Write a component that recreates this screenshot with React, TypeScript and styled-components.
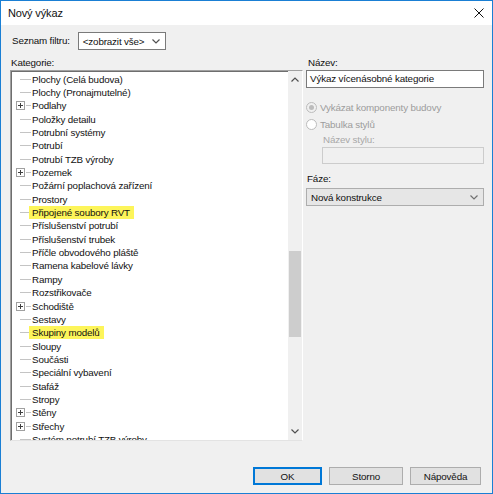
import * as React from 'react';
import styled, { createGlobalStyle } from 'styled-components';

const Global = createGlobalStyle`
	html, body { margin: 0; padding: 0; background: #fff; }
	* { box-sizing: border-box; }
`;

const FONT = `"Liberation Sans", Arial, sans-serif`;

const Window = styled.div`
	width: 493px;
	height: 494px;
	border: 1px solid #1a7fd4;
	display: flex;
	flex-direction: column;
	font-family: ${FONT};
	font-size: 9.8px;
	letter-spacing: -0.15px;
	color: #111;
	background: #f0f0f0;
`;

const TitleBar = styled.div`
	height: 24px;
	background: #fff;
	display: flex;
	align-items: center;
	justify-content: space-between;
	padding: 0 8px 0 7px;
`;

const Title = styled.span`
	font-size: 11px;
	letter-spacing: -0.15px;
`;

const Body = styled.div`
	flex: 1;
	display: flex;
	flex-direction: column;
	padding: 6px 8px 8px 9px;
`;

const FilterRow = styled.div`
	height: 20px;
	display: flex;
	align-items: center;
	gap: 8px;
	padding-left: 1px;
`;

const Label = styled.div<{ $muted?: boolean; $indent?: number }>`
	height: 14px;
	line-height: 14px;
	white-space: nowrap;
	color: ${p => (p.$muted ? '#a8a8a8' : '#111')};
	padding-left: ${p => p.$indent ?? 1}px;
`;

// Combo box / drop-down
const Select = styled.div<{ $width?: number; $flat?: boolean }>`
	width: ${p => (p.$width ? `${p.$width}px` : 'auto')};
	height: 18px;
	display: flex;
	align-items: center;
	justify-content: space-between;
	padding: 0 5px 0 4px;
	background: ${p => (p.$flat ? '#e6e6e6' : '#fff')};
	border: 1px solid ${p => (p.$flat ? '#adadad' : '#7a7a7a')};
	white-space: nowrap;
`;

const Columns = styled.div`
	margin-top: 5px;
	display: grid;
	grid-template-columns: 293px 178px;
	column-gap: 3px;
`;

const Col = styled.div`
	display: flex;
	flex-direction: column;
`;

const TreeBox = styled.div`
	height: 371px;
	display: flex;
	background: #fff;
	border: 1px solid;
	border-color: #a0a0a0 #fff #e3e3e3 #a0a0a0;
	box-shadow: inset 1px 1px 0 #6e6e6e;
	overflow: hidden;
`;

const TreeList = styled.div`
	flex: 1;
	padding-top: 1.5px;
	overflow: hidden;
`;

const Row = styled.div`
	height: 13.35px;
	display: flex;
	align-items: center;
	white-space: nowrap;
`;

// Connector area to the left of the label
const Stub = styled.div`
	width: 21px;
	height: 100%;
	display: flex;
	align-items: center;
	padding-left: 5px;
	flex-shrink: 0;
`;

const Line = styled.div<{ $short?: boolean }>`
	flex: 1;
	height: 1px;
	background: #c4c4c4;
	margin-left: ${p => (p.$short ? 1 : 4)}px;
	margin-right: 1px;
`;

const Expander = styled.div`
	width: 9px;
	height: 9px;
	border: 1px solid #a0a0a0;
	background: #fff;
	position: relative;
	flex-shrink: 0;

	&:before {
		content: '';
		position: absolute;
		left: 1px;
		top: 3px;
		width: 5px;
		height: 1px;
		background: #404040;
	}
	&:after {
		content: '';
		position: absolute;
		left: 3px;
		top: 1px;
		width: 1px;
		height: 5px;
		background: #404040;
	}
`;

const Name = styled.span<{ $hi?: boolean }>`
	height: 13px;
	line-height: 13px;
	padding: 0 4px 0 3px;
	margin-left: -3px;
	background: ${p => (p.$hi ? '#fdf55a' : 'transparent')};
`;

const ScrollBar = styled.div`
	width: 14px;
	display: flex;
	flex-direction: column;
	background: #f0f0f0;
`;

const ArrowBtn = styled.div`
	height: 17px;
	display: flex;
	align-items: center;
	justify-content: center;
`;

const Track = styled.div`
	flex: 1;
	padding: 0 1px;
`;

const Thumb = styled.div<{ $top: number; $height: number }>`
	margin-top: ${p => p.$top}px;
	height: ${p => p.$height}px;
	background: #cdcdcd;
`;

const Input = styled.div<{ $disabled?: boolean }>`
	height: 18px;
	line-height: 16px;
	padding-left: 3px;
	background: ${p => (p.$disabled ? '#f0f0f0' : '#fff')};
	border: 1px solid ${p => (p.$disabled ? '#cccccc' : '#7a7a7a')};
	white-space: nowrap;
`;

const RadioGroup = styled.div`
	margin-top: 11px;
	display: flex;
	flex-direction: column;
`;

const RadioRow = styled.div`
	height: 17px;
	display: flex;
	align-items: center;
	gap: 3px;
	color: #9c9c9c;
	white-space: nowrap;
`;

const RadioDot = styled.div<{ $checked?: boolean; $filled?: boolean }>`
	width: 11px;
	height: 11px;
	border-radius: 50%;
	border: 1px solid #bcbcbc;
	background: ${p => (p.$filled ? '#fff' : '#f0f0f0')};
	display: flex;
	align-items: center;
	justify-content: center;

	&:after {
		content: '';
		width: 5px;
		height: 5px;
		border-radius: 50%;
		background: ${p => (p.$checked ? '#bcbcbc' : 'transparent')};
	}
`;

const Footer = styled.div`
	margin-top: auto;
	display: flex;
	justify-content: flex-end;
	gap: 7px;
	padding-right: 3px;
`;

const Button = styled.div<{ $width: number; $default?: boolean }>`
	width: ${p => p.$width}px;
	height: 18px;
	display: flex;
	align-items: center;
	justify-content: center;
	background: #e1e1e1;
	border: 1px solid ${p => (p.$default ? '#0078d7' : '#adadad')};
	box-shadow: ${p => (p.$default ? 'inset 0 0 0 1px #0078d7' : 'none')};
`;

const Chevron = ({ up, color = '#505050' }: { up?: boolean; color?: string }) => (
	<svg width="8" height="5" viewBox="0 0 8 5">
		<polyline
			points={up ? '0.5,4.5 4,1 7.5,4.5' : '0.5,0.5 4,4 7.5,0.5'}
			fill="none"
			stroke={color}
			strokeWidth="1.2"
		/>
	</svg>
);

const CloseIcon = () => (
	<svg width="10" height="10" viewBox="0 0 10 10">
		<path d="M0.5 0.5 L9.5 9.5 M9.5 0.5 L0.5 9.5" stroke="#111" strokeWidth="1" />
	</svg>
);

const categories: [string, boolean?, boolean?][] = [
	['Plochy (Celá budova)'],
	['Plochy (Pronajmutelné)'],
	['Podlahy', true],
	['Položky detailu'],
	['Potrubní systémy'],
	['Potrubí'],
	['Potrubí TZB výroby'],
	['Pozemek', true],
	['Požární poplachová zařízení'],
	['Prostory'],
	['Připojené soubory RVT', false, true],
	['Příslušenství potrubí'],
	['Příslušenství trubek'],
	['Příčle obvodového pláště'],
	['Ramena kabelové lávky'],
	['Rampy'],
	['Rozstřikovače'],
	['Schodiště', true],
	['Sestavy'],
	['Skupiny modelů', false, true],
	['Sloupy'],
	['Součásti'],
	['Speciální vybavení'],
	['Stafáž'],
	['Stropy'],
	['Stěny', true],
	['Střechy', true],
	['Systém potrubí TZB výroby'],
];

export default function App() {
	return (
		<>
			<Global />
			<Window>
				<TitleBar>
					<Title>Nový výkaz</Title>
					<CloseIcon />
				</TitleBar>
				<Body>
					<FilterRow>
						<Label>Seznam filtru:</Label>
						<Select $width={88}>
							<span>&lt;zobrazit vše&gt;</span>
							<Chevron />
						</Select>
					</FilterRow>
					<Columns>
						<Col>
							<Label>Kategorie:</Label>
							<TreeBox>
								<TreeList>
									{categories.map(([name, plus, hi]) => (
										<Row key={name}>
											<Stub>
												{plus ? <Expander /> : null}
												<Line $short={plus} />
											</Stub>
											<Name $hi={hi}>{name}</Name>
										</Row>
									))}
								</TreeList>
								<ScrollBar>
									<ArrowBtn>
										<Chevron up />
									</ArrowBtn>
									<Track>
										<Thumb $top={163} $height={86} />
									</Track>
									<ArrowBtn>
										<Chevron />
									</ArrowBtn>
								</ScrollBar>
							</TreeBox>
						</Col>
						<Col>
							<Label $indent={2}>Název:</Label>
							<Input>Výkaz vícenásobné kategorie</Input>
							<RadioGroup>
								<RadioRow>
									<RadioDot $checked />
									Vykázat komponenty budovy
								</RadioRow>
								<RadioRow>
									<RadioDot $filled />
									Tabulka stylů
								</RadioRow>
							</RadioGroup>
							<Label $muted $indent={17}>
								Název stylu:
							</Label>
							<Input $disabled style={{ marginLeft: 16, height: 17 }} />
							<Label style={{ marginTop: 8 }}>Fáze:</Label>
							<Select $flat style={{ marginTop: 2 }}>
								<span>Nová konstrukce</span>
								<Chevron color="#707070" />
							</Select>
						</Col>
					</Columns>
					<Footer>
						<Button $width={69} $default>
							OK
						</Button>
						<Button $width={74}>Storno</Button>
						<Button $width={71}>Nápověda</Button>
					</Footer>
				</Body>
			</Window>
		</>
	);
}
